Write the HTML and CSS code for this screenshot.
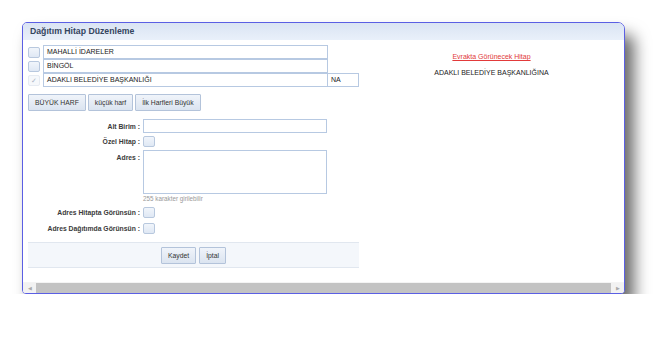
FILE: index.html
```html
<!DOCTYPE html>
<html lang="tr">
<head>
  <meta charset="UTF-8">
  <title>Dağıtım Hitap Düzenleme</title>
  <link rel="stylesheet" href="styles.css">
</head>
<body>

  <div class="win">
    <div class="title">Dağıtım Hitap Düzenleme</div>

    <div class="content">
      <div class="left">
        <!-- hiyerarşi satırları -->
        <div class="pick-row">
          <span class="cb"></span>
          <span class="field">MAHALLİ İDARELER</span>
        </div>
        <div class="pick-row">
          <span class="cb"></span>
          <span class="field">BİNGÖL</span>
        </div>
        <div class="pick-row">
          <span class="cb checked">&#10003;</span>
          <span class="field">ADAKLI BELEDİYE BAŞKANLIĞI</span>
          <span class="field suffix">NA</span>
        </div>

        <div class="case-btns">
          <button>BÜYÜK HARF</button>
          <button>küçük harf</button>
          <button>İlk Harfleri Büyük</button>
        </div>

        <div class="form">
          <div class="frow">
            <label>Alt Birim :</label>
            <span class="field wide"></span>
          </div>
          <div class="frow">
            <label>Özel Hitap :</label>
            <span class="cb"></span>
          </div>
          <div class="frow top">
            <label>Adres :</label>
            <div>
              <span class="field area"></span>
              <div class="hint">255 karakter girilebilir</div>
            </div>
          </div>
          <div class="frow">
            <label>Adres Hitapta Görünsün :</label>
            <span class="cb"></span>
          </div>
          <div class="frow">
            <label>Adres Dağıtımda Görünsün :</label>
            <span class="cb"></span>
          </div>
        </div>

        <div class="footer">
          <button>Kaydet</button>
          <button>İptal</button>
        </div>
      </div>

      <div class="right">
        <div class="link">Evrakta Görünecek Hitap</div>
        <div class="preview">ADAKLI BELEDİYE BAŞKANLIĞINA</div>
      </div>
    </div>

    <div class="hscroll">
      <span class="arrow">&#9664;</span>
      <span class="thumb"></span>
      <span class="arrow">&#9654;</span>
    </div>
  </div>

</body>
</html>
```

FILE: styles.css
```css
body { margin: 0; background: #fff; font-family: "Liberation Sans", Arial, sans-serif; font-size: 7px; color: #222; }

.win { margin: 22px 0 0 22px; width: 603px; height: 272px; box-sizing: border-box; border: 1px solid #5b5fe4; border-radius: 5px 7px 4px 4px; background: #fff; display: flex; flex-direction: column; overflow: hidden; box-shadow: 9px 13px 16px rgba(0,0,0,0.6); }
.title { height: 17px; line-height: 17px; padding-left: 7px; font-size: 8.7px; font-weight: bold; color: #34455e; background: linear-gradient(#dae4f3, #e9f0fa); flex: none; }

.content { flex: 1; display: flex; padding: 5px 0 0 5px; }
.left { width: 331px; flex: none; }
.right { flex: 1; text-align: center; padding-top: 7px; }
.link { color: #e23a3a; text-decoration: underline; line-height: 9px; }
.preview { margin-top: 7px; line-height: 9px; }

.pick-row { display: flex; align-items: center; height: 14px; }
.pick-row .field { height: 14px; margin-top: -1px; }
.pick-row:first-child .field { margin-top: 0; }
.field { display: block; box-sizing: border-box; width: 285px; border: 1px solid #b7c9e2; background: #fff; padding-left: 3px; line-height: 12px; white-space: nowrap; }
.pick-row .cb { margin-right: 3px; }
.suffix { width: 32px; margin-left: -1px; }

.cb { display: inline-block; box-sizing: border-box; width: 12px; height: 11px; border: 1px solid #b8c8de; border-radius: 2px; background: linear-gradient(#f1f5fb, #dfe8f4); flex: none; }
.cb.checked { border-color: #e6ebf2; background: #f6f8fb; color: #a9b4c2; font-size: 7px; line-height: 9px; text-align: center; }

button { font-family: inherit; font-size: 6.8px; color: #333; height: 17px; padding: 0 6px; border: 1px solid #b3c3da; border-radius: 1px; background: linear-gradient(#f0f4fa, #dbe4f0); cursor: pointer; }
.case-btns { display: flex; gap: 2px; margin-top: 7px; }

.form { margin-top: 8px; }
.frow { display: flex; align-items: center; gap: 3px; margin-top: 3px; }
.frow:first-child { margin-top: 0; }
.frow label { width: 112px; text-align: right; font-weight: bold; font-size: 6.8px; color: #3a3a3a; flex: none; }
.frow.top { align-items: flex-start; }
.frow.top label { padding-top: 4px; }
.field.wide { width: 184px; height: 14px; }
.field.area { width: 184px; height: 44px; }
.hint { color: #999; font-size: 6.3px; line-height: 9px; }
.frow:nth-child(4) { margin-top: 4px; }
.frow:nth-child(5) { margin-top: 5px; }

.footer { margin-top: 8px; height: 26px; border-top: 1px solid #e1e7ef; border-bottom: 1px solid #e1e7ef; background: #f4f7fb; display: flex; justify-content: center; align-items: center; gap: 3px; box-sizing: border-box; }

.hscroll { height: 11px; flex: none; display: flex; background: #ececec; border-top: 1px solid #f4f4f4; box-sizing: border-box; }
.arrow { width: 13px; font-size: 5px; color: #aaa; line-height: 10px; text-align: center; background: #f2f2f2; }
.thumb { flex: 1; background: #c3c3c3; }
```
